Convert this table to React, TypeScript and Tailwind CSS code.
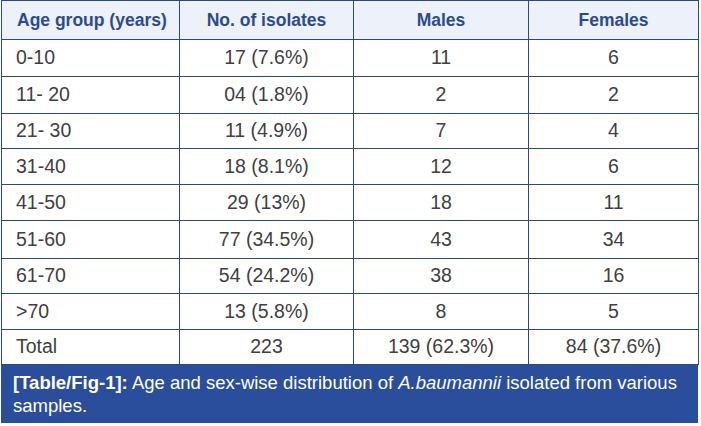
import React from "react";

const rows: [string, string, string, string, number][] = [
  ["0-10", "17 (7.6%)", "11", "6", 37],
  ["11- 20", "04 (1.8%)", "2", "2", 37],
  ["21- 30", "11 (4.9%)", "7", "4", 35],
  ["31-40", "18 (8.1%)", "12", "6", 36],
  ["41-50", "29 (13%)", "18", "11", 36],
  ["51-60", "77 (34.5%)", "43", "34", 38],
  ["61-70", "54 (24.2%)", "38", "16", 35],
  [">70", "13 (5.8%)", "8", "5", 36],
  ["Total", "223", "139 (62.3%)", "84 (37.6%)", 35],
];

export default function App() {
  return (
    <div
      className="w-[701px] h-[426px] bg-white pl-[1px]"
      style={{ fontFamily: '"Liberation Sans", Arial, sans-serif' }}
    >
      <table className="border-collapse table-fixed w-[697px]">
        <colgroup>
          <col className="w-[178px]" />
          <col className="w-[174px]" />
          <col className="w-[175px]" />
          <col className="w-[170px]" />
        </colgroup>
        <thead>
          <tr className="h-[39px] bg-[#edf1f9] text-[#2c4b8e] text-[17.5px] font-bold">
            <th className="border border-[#2b4a7c] text-left pl-[15px] font-bold">Age group (years)</th>
            <th className="border border-[#2b4a7c] text-center font-bold">No. of isolates</th>
            <th className="border border-[#2b4a7c] text-center font-bold">Males</th>
            <th className="border border-[#2b4a7c] text-center font-bold">Females</th>
          </tr>
        </thead>
        <tbody className="text-[19.5px] text-[#404040]">
          {rows.map((r, i) => (
            <tr key={i} style={{ height: r[4] }}>
              <td className="border border-[#2b4a7c] pl-[14px]">{r[0]}</td>
              <td className="border border-[#2b4a7c] text-center">{r[1]}</td>
              <td className="border border-[#2b4a7c] text-center">{r[2]}</td>
              <td className="border border-[#2b4a7c] text-center">{r[3]}</td>
            </tr>
          ))}
        </tbody>
      </table>
      <div className="w-[697px] h-[58px] bg-[#2a4d9c] text-white text-[18.5px] leading-[23px] pl-[12px] pr-[6px] pt-[6px]">
        <span className="font-bold">[Table/Fig-1]:</span> Age and sex-wise distribution of{" "}
        <i>A.baumannii</i> isolated from various samples.
      </div>
    </div>
  );
}
